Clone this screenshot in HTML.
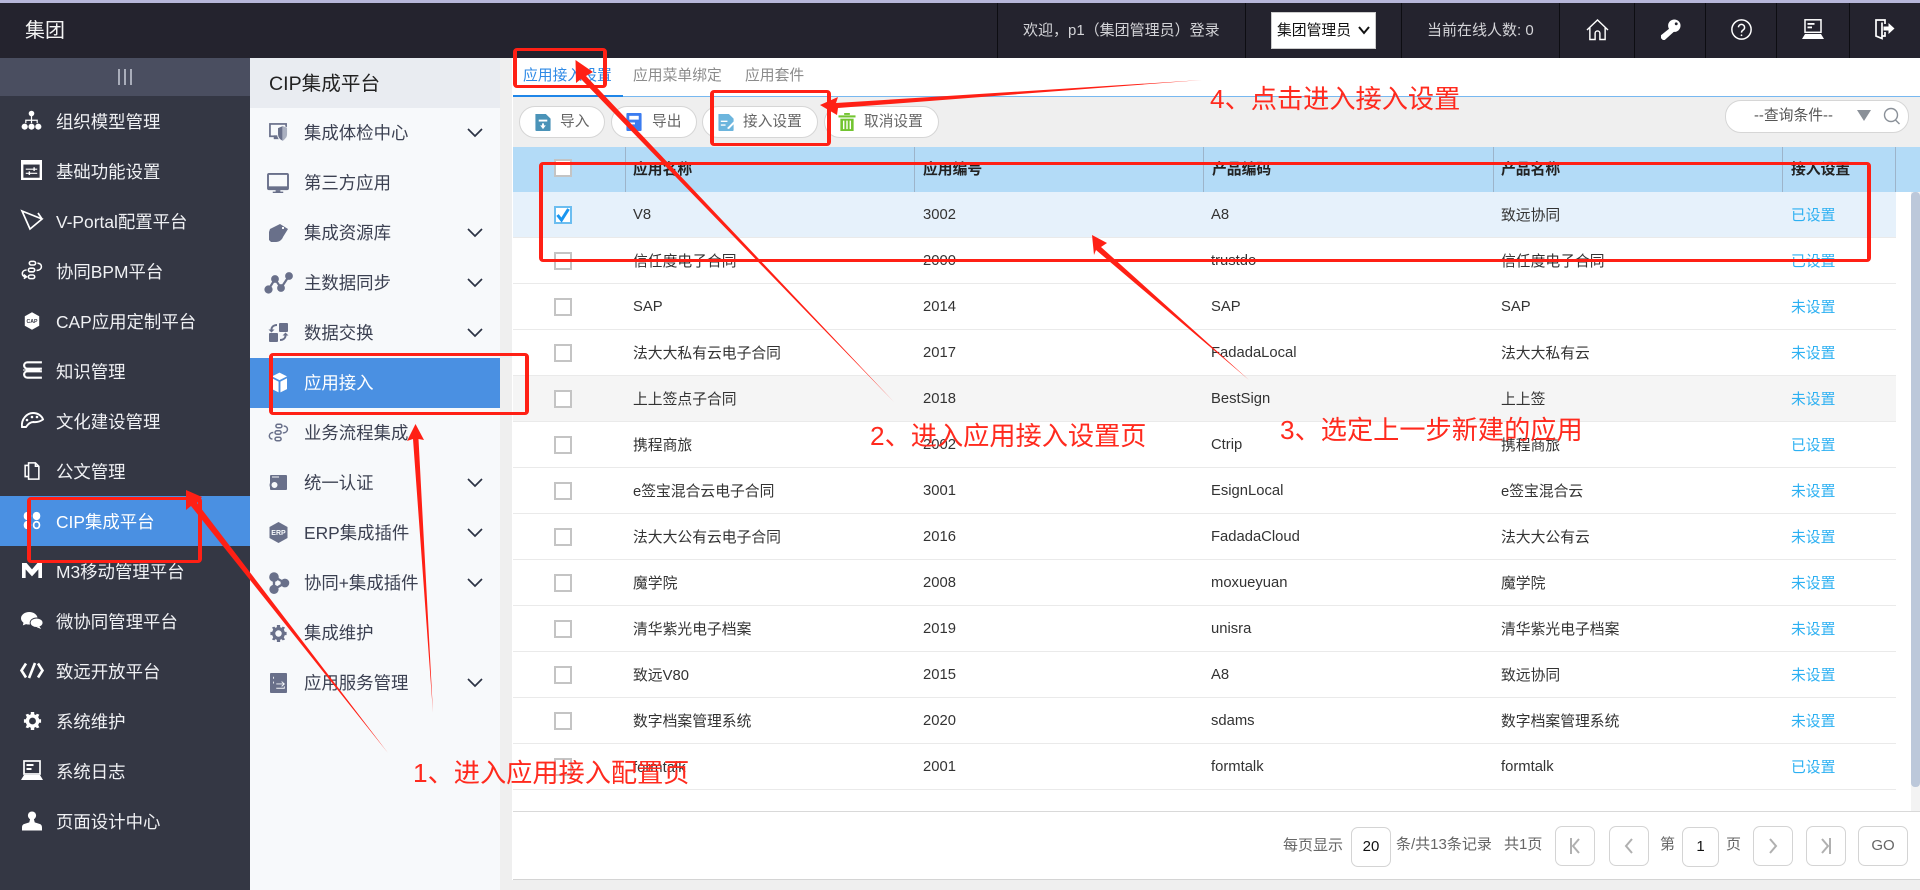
<!DOCTYPE html>
<html lang="zh-CN"><head><meta charset="utf-8"><title>CIP集成平台</title>
<style>
html,body{margin:0;padding:0;background:#fff}
#p{position:relative;width:1920px;height:890px;overflow:hidden;background:#fff;font-family:"Liberation Sans","Noto Sans CJK SC",sans-serif;color:#333}
#p div,#p span.a{position:absolute;white-space:nowrap}
#p svg{position:absolute;overflow:visible}
.n{left:56px;width:190px;height:50px;line-height:50px;font-size:17.4px;color:#f0f1f4;transform:translateY(1px)}
.s{left:304px;width:170px;height:50px;line-height:50px;font-size:17.4px;color:#3c4152}
.sep{top:3px;width:1px;height:55px;background:#0d0d12}
.t{height:46px;line-height:46px;font-size:14.8px;color:#333;transform:translateY(1px)}
.h{top:147px;height:45px;line-height:45px;font-size:14.8px;color:#222;font-weight:bold;transform:translateY(1px)}
.hs{top:147px;width:1px;height:45px;background:#9db4ca}
.rl{left:513px;width:1383px;height:1px;background:#eaeaea}
.l{height:46px;line-height:46px;font-size:14.8px;color:#2cb0f2;left:1791px;transform:translateY(1px)}
.c{left:554px;width:14px;height:14px;border:2px solid #c4c4c4;background:#fff}
.b{top:106px;height:30px;border:1px solid #d6d6d6;border-radius:16px;background:#fff;line-height:30px;font-size:14.7px;color:#666}
.pb{top:826px;height:38px;border:1px solid #d4d4d4;border-radius:7px;background:#fff;text-align:center;line-height:38px;font-size:15px;color:#666}
.f{top:826px;height:38px;line-height:38px;font-size:15px;color:#666}
.r{border-style:solid;border-color:#ff2015;border-width:3.5px 4.5px;border-radius:4px;box-sizing:border-box}
.lab{font-size:26.2px;color:#ff2a1e;height:36px;line-height:36px}
</style></head><body><div id="p">

<!-- top -->
<div style="left:0;top:0;width:1920px;height:3px;background:#b7b7da"></div>
<div style="left:0;top:3px;width:1920px;height:55px;background:#24232e"></div>
<div style="left:25px;top:11px;height:40px;line-height:40px;font-size:20px;color:#f4f4f4">集团</div>
<div class="sep" style="left:997px"></div><div class="sep" style="left:1245px"></div><div class="sep" style="left:1401px"></div><div class="sep" style="left:1559px"></div><div class="sep" style="left:1634px"></div><div class="sep" style="left:1705px"></div><div class="sep" style="left:1776px"></div><div class="sep" style="left:1849px"></div>
<div style="left:1023px;top:11px;height:40px;line-height:40px;font-size:15px;color:#d4d4d8">欢迎，p1（集团管理员）登录</div>
<div style="left:1271px;top:12px;width:105px;height:37px;background:#fff;border:1px solid #ccc;box-sizing:border-box"></div>
<div style="left:1277px;top:11px;height:40px;line-height:40px;font-size:14.8px;color:#111">集团管理员</div>
<svg style="left:1358px;top:25px" width="12" height="10" viewBox="0 0 12 10"><path d="M1 2l5 6 5-6" fill="none" stroke="#111" stroke-width="2"/></svg>
<div style="left:1427px;top:11px;height:40px;line-height:40px;font-size:15px;color:#d4d4d8">当前在线人数: 0</div>

<svg style="left:1586px;top:19px" width="23" height="21" viewBox="0 0 24 22" fill="none" stroke="#fff" stroke-width="1.500"><path d="M1 11.500 12 1l11 10.500"/><path d="M4 9v12.500h5.500V15a2.500 2.500 0 0 1 5 0v6.500H20V9"/></svg>
<svg style="left:1660px;top:19px" width="21" height="21" viewBox="0 0 22 22"><circle cx="15" cy="7" r="6.500" fill="#fff"/><circle cx="17" cy="5" r="1.500" fill="#24232e"/><path d="M11 9 1 17v3l2 2h2l10-9z" fill="#fff"/></svg>
<svg style="left:1731px;top:19px" width="21" height="21" viewBox="0 0 24 24" fill="none" stroke="#fff" stroke-width="1.700"><circle cx="12" cy="12" r="11"/><path d="M8.500 9.500a3.500 3.500 0 1 1 5.500 3c-1.300.8-2 1.500-2 3"/><circle cx="12" cy="18.500" r="1" fill="#fff" stroke="none"/></svg>
<svg style="left:1802px;top:19px" width="22" height="20" viewBox="0 0 22 20"><rect x="3" y=".8" width="16" height="12.500" fill="none" stroke="#fff" stroke-width="1.500"/><rect x="5.500" y="4" width="7" height="1.800" fill="#fff"/><rect x="5.500" y="7.500" width="4.500" height="1.800" fill="#fff"/><path d="M3 15h16l3 5H0z" fill="#fff"/></svg>
<svg style="left:1875px;top:19px" width="20" height="20" viewBox="0 0 20 20" fill="none" stroke="#fff" stroke-width="1.700"><path d="M10 5V1H1v16l6 2.500V3.500"/><path d="M7 17h3v-4"/><path d="M8.500 7.500h5V4l6 5.500-6 5.500v-3.500h-5z" fill="#fff" stroke="none"/></svg>

<!-- left sidebar -->
<div style="left:0;top:58px;width:250px;height:832px;background:#343744"></div>
<div style="left:0;top:58px;width:250px;height:38px;background:#4a4e60"></div>
<div style="left:118px;top:69px;width:2px;height:16px;background:#a9adba"></div><div style="left:124px;top:69px;width:2px;height:16px;background:#a9adba"></div><div style="left:130px;top:69px;width:2px;height:16px;background:#a9adba"></div>
<div style="left:0;top:496px;width:250px;height:50px;background:#4a90e2"></div>

<div class="n" style="top:96px">组织模型管理</div>
<div class="n" style="top:146px">基础功能设置</div>
<div class="n" style="top:196px">V-Portal配置平台</div>
<div class="n" style="top:246px">协同BPM平台</div>
<div class="n" style="top:296px">CAP应用定制平台</div>
<div class="n" style="top:346px">知识管理</div>
<div class="n" style="top:396px">文化建设管理</div>
<div class="n" style="top:446px">公文管理</div>
<div class="n" style="top:496px;color:#fff">CIP集成平台</div>
<div class="n" style="top:546px">M3移动管理平台</div>
<div class="n" style="top:596px">微协同管理平台</div>
<div class="n" style="top:646px">致远开放平台</div>
<div class="n" style="top:696px">系统维护</div>
<div class="n" style="top:746px">系统日志</div>
<div class="n" style="top:796px">页面设计中心</div>

<svg style="left:21px;top:110px" width="21" height="21" viewBox="0 0 23 24" fill="#fff"><circle cx="11.500" cy="4" r="3.200"/><path d="M10.800 6h1.400v5h6.500v4h-1.400v-2.600H12.200V15h-1.400v-2.600H5.700V15H4.300v-4h6.500z"/><circle cx="3.700" cy="19" r="3.500"/><circle cx="11.500" cy="19" r="3.500"/><circle cx="19.300" cy="19" r="3.500"/></svg>
<svg style="left:21px;top:160px" width="21" height="20" viewBox="0 0 22 22" preserveAspectRatio="none"><rect width="22" height="22" fill="#fff"/><rect x="2.500" y="5" width="17" height="14.500" fill="#343744"/><path d="M5 9.500h12v1.200H5zM5 14h12v1.200H5z" fill="#fff"/><rect x="13" y="8" width="1.500" height="4" fill="#fff"/><rect x="8" y="12.500" width="1.500" height="4" fill="#fff"/></svg>
<svg style="left:21px;top:210px" width="22" height="20" viewBox="0 0 22 20" fill="none" stroke="#fff" stroke-width="1.700"><path d="M1 1l20 8L9 19z"/><path d="M17 3l4 6"/></svg>
<svg style="left:21px;top:260px" width="22" height="20" viewBox="0 0 24 22" fill="none" stroke="#fff" stroke-width="1.700"><rect x="9" y="1.500" width="7" height="4" rx="2"/><rect x="8" y="9" width="7" height="4" rx="2"/><rect x="8" y="16.500" width="7" height="4" rx="2"/><path d="M18 3.500c6 0 6 8-1 8"/><path d="M6 11C0 11 0 18.500 5 18.500"/><path d="M3 16l3 2.500-3 2"/></svg>
<svg style="left:24px;top:312px" width="16" height="18" viewBox="0 0 20 22"><path d="M10 0l9 5v12l-9 5-9-5V5z" fill="#fff"/><text x="10" y="13.500" font-size="6.500" font-family="Liberation Sans" font-weight="bold" fill="#343744" text-anchor="middle">CAP</text></svg>
<svg style="left:21px;top:361px" width="22" height="18" viewBox="0 0 24 20" fill="none" stroke="#fff" stroke-width="2.400"><path d="M23 1.500H7c-5 0-5 7 0 7h16"/><path d="M23 11.500H7c-5 0-5 7 0 7h16"/><path d="M2 10h19" stroke-width="1"/></svg>
<svg style="left:20px;top:412px" width="24" height="16" viewBox="0 0 24 16" fill="none" stroke="#fff" stroke-width="1.900"><path d="M6 15H2C1 7 7 1 13 1c5 0 9 3 10 6.500-3 2-6 3-9.500 2.500C10 10 8 12 6 15z"/><circle cx="7" cy="8" r="1.300" fill="#fff" stroke="none"/><circle cx="12" cy="5" r="1.300" fill="#fff" stroke="none"/><circle cx="17" cy="5" r="1.300" fill="#fff" stroke="none"/></svg>
<svg style="left:24px;top:462px" width="16" height="18" viewBox="0 0 18 21" fill="none" stroke="#fff" stroke-width="1.800"><path d="M5 4V1h8l4 4v15H5z"/><path d="M13 1v4h4"/><path d="M5 4H1v13h4"/></svg>
<svg style="left:22px;top:511px" width="20" height="19" viewBox="0 0 22 23"><rect x="1" y="1" width="9" height="10" rx="4.500" fill="#fff"/><rect x="12" y="1" width="9" height="10" rx="4.500" fill="#fff"/><rect x="1" y="12" width="9" height="10" rx="4.500" fill="#fff"/><rect x="13" y="13" width="7" height="8" rx="3.500" fill="none" stroke="#fff" stroke-width="2"/></svg>
<svg style="left:22px;top:563px" width="20" height="15" viewBox="0 0 22 19" preserveAspectRatio="none"><path d="M0 0h5l6 8 6-8h5v19h-4V8l-7 9-7-9v11H0z" fill="#fff"/></svg>
<svg style="left:21px;top:612px" width="22" height="17" viewBox="0 0 24 19" preserveAspectRatio="none" fill="#fff"><ellipse cx="9" cy="7" rx="9" ry="7"/><path d="M3 11l-1 4 5-2z"/><ellipse cx="17" cy="12" rx="7" ry="5.300" stroke="#343744"/><path d="M20 16l2 3-5-2z"/></svg>
<svg style="left:20px;top:662px" width="24" height="17" viewBox="0 0 24 17" fill="none" stroke="#fff" stroke-width="2.600"><path d="M6 1.500 1.500 8.500 6 15.500"/><path d="M18 1.500l4.500 7-4.500 7"/><path d="M15 1 9 16"/></svg>
<svg style="left:23px;top:712px" width="19" height="18" viewBox="0 0 20 21"><circle cx="10" cy="10.500" r="6" fill="none" stroke="#fff" stroke-width="4"/><path d="M8 0h4v4H8zM8 17h4v4H8zM0 8.500h4v4H0zM16 8.500h4v4h-4zM2 3l3-1 2 3-3 2zM18 3l-3-1-2 3 3 2zM2 18l3 1 2-3-3-2zM18 18l-3 1-2-3 3-2z" fill="#fff"/></svg>
<svg style="left:21px;top:760px" width="22" height="20" viewBox="0 0 22 20"><rect x="3" y="1" width="16" height="13" fill="none" stroke="#fff" stroke-width="1.700"/><rect x="5.500" y="4" width="7" height="2" fill="#fff"/><rect x="5.500" y="8" width="5" height="2" fill="#fff"/><path d="M3 15h16l3 5H0z" fill="#fff"/></svg>
<svg style="left:22px;top:811px" width="20" height="20" viewBox="0 0 22 21" fill="#fff"><circle cx="11" cy="4.500" r="4.500"/><path d="M9 8h4l1 4 6 2c2 1 2 3 2 4v3H0v-3c0-1 0-3 2-4l6-2z"/></svg>

<!-- second column -->
<div style="left:250px;top:58px;width:250px;height:832px;background:#f7f9fb"></div>
<div style="left:250px;top:58px;width:250px;height:50px;background:#e9ecf1"></div>
<div style="left:269px;top:59px;height:50px;line-height:50px;font-size:19.6px;color:#222">CIP集成平台</div>
<div style="left:500px;top:58px;width:12px;height:832px;background:#efefef"></div>
<div style="left:250px;top:358px;width:250px;height:50px;background:#4a90e2"></div>

<div class="s" style="top:108px">集成体检中心</div>
<div class="s" style="top:158px">第三方应用</div>
<div class="s" style="top:208px">集成资源库</div>
<div class="s" style="top:258px">主数据同步</div>
<div class="s" style="top:308px">数据交换</div>
<div class="s" style="top:358px;color:#fff">应用接入</div>
<div class="s" style="top:408px">业务流程集成</div>
<div class="s" style="top:458px">统一认证</div>
<div class="s" style="top:508px">ERP集成插件</div>
<div class="s" style="top:558px">协同+集成插件</div>
<div class="s" style="top:608px">集成维护</div>
<div class="s" style="top:658px">应用服务管理</div>

<svg style="left:269px;top:123px" width="19" height="19" viewBox="0 0 20 20"><rect x="1" y="1" width="17" height="13" fill="none" stroke="#69708a" stroke-width="1.800"/><rect x="5" y="13" width="6" height="4" fill="#69708a"/><path d="M9 5l5-2 5 2v7c0 3-3 6-5 7-3-1-5-4-5-7z" fill="#69708a" stroke="#f7f9fb"/><path d="M14 3v16c2-1 5-4 5-7V5z" fill="#aab0c0"/></svg>
<svg style="left:267px;top:173px" width="22" height="20" viewBox="0 0 23 21"><path d="M2 0h19a2 2 0 0 1 2 2v14a2 2 0 0 1-2 2H2a2 2 0 0 1-2-2V2a2 2 0 0 1 2-2z" fill="#69708a"/><rect x="2" y="2" width="19" height="12" fill="#f7f9fb"/><path d="M9 18h5v1.500h3V21H6v-1.500h3z" fill="#69708a"/></svg>
<svg style="left:268px;top:223px" width="21" height="20" viewBox="0 0 21 20" fill="#69708a"><path d="M12 1l8 5-5 8c-1 3-4 5-7 5H3l-2-2V9l1-3 4-2z"/><rect x="14" y="4" width="2" height="2" fill="#f7f9fb"/></svg>
<svg style="left:265px;top:273px" width="27" height="20" viewBox="0 0 27 20" fill="none" stroke="#69708a" stroke-width="2.200"><path d="M3.500 16.500 10 6l6 9 8-12"/><circle cx="3.500" cy="16.500" r="3" fill="#69708a"/><circle cx="10" cy="6" r="2.800" fill="#69708a"/><circle cx="16" cy="15" r="2.800" fill="#69708a"/><circle cx="24" cy="3" r="2.800" fill="#69708a"/></svg>
<svg style="left:269px;top:323px" width="19" height="19" viewBox="0 0 19 19" fill="#69708a"><rect x="10" y="0" width="9" height="9" rx="1"/><rect x="0" y="10" width="9" height="9" rx="1"/><path d="M8 1v2C5 3 3.500 4.500 3.500 6.500H5.500L2.500 9.500-.5 6.500h2C1.500 3.500 4 1 8 1zM11 18v-2c3 0 4.500-1.500 4.500-3.500h-2l3-3 3 3h-2C17.500 15.500 15 18 11 18z"/></svg>
<svg style="left:272px;top:372px" width="15" height="21" viewBox="0 0 16 21" fill="#fff"><path d="M8 0l8 4-8 4-8-4z"/><path d="M0 6l7 3.500V21l-7-3.500zM16 6l-7 3.500V21l7-3.500z"/></svg>
<svg style="left:267px;top:423px" width="23" height="19" viewBox="0 0 24 22" fill="none" stroke="#69708a" stroke-width="1.700"><rect x="9" y="1.500" width="7" height="4" rx="2"/><rect x="8" y="9" width="7" height="4" rx="2"/><rect x="8" y="16.500" width="7" height="4" rx="2"/><path d="M18 3.500c6 0 6 8-1 8"/><path d="M6 11C0 11 0 18.500 5 18.500"/></svg>
<svg style="left:270px;top:475px" width="17" height="15" viewBox="0 0 17 15" fill="#69708a"><rect x="0" y="0" width="17" height="15" rx="1"/><rect x="2" y="1.500" width="7" height="1" fill="#f7f9fb"/><circle cx="4.500" cy="10" r="4" fill="#f7f9fb" stroke="#69708a" stroke-width="2"/></svg>
<svg style="left:269px;top:522px" width="19" height="21" viewBox="0 0 19 21"><path d="M9.500 0l9 5v11l-9 5-9-5V5z" fill="#69708a"/><text x="9.500" y="13" font-size="7" font-family="Liberation Sans" font-weight="bold" fill="#f7f9fb" text-anchor="middle">ERP</text></svg>
<svg style="left:269px;top:573px" width="20" height="20" viewBox="0 0 21 22" fill="none" stroke="#69708a" stroke-width="2.600"><path d="M5 4l12 7L5 18z"/><circle cx="5" cy="4.500" r="4" fill="#69708a"/><circle cx="17" cy="11" r="3.500" fill="#69708a"/><circle cx="5" cy="18" r="3.800" fill="#69708a"/></svg>
<svg style="left:270px;top:625px" width="17" height="17" viewBox="0 0 20 21"><circle cx="10" cy="10.500" r="6" fill="none" stroke="#69708a" stroke-width="4"/><path d="M8 0h4v4H8zM8 17h4v4H8zM0 8.500h4v4H0zM16 8.500h4v4h-4zM2 3l3-1 2 3-3 2zM18 3l-3-1-2 3 3 2zM2 18l3 1 2-3-3-2zM18 18l-3 1-2-3 3-2z" fill="#69708a"/></svg>
<svg style="left:270px;top:673px" width="17" height="20" viewBox="0 0 19 21" preserveAspectRatio="none"><rect width="19" height="21" rx="1" fill="#69708a"/><path d="M7 11.500h9M13 9l3 2.500-3 2.500M7 16h9v-2" fill="none" stroke="#f7f9fb" stroke-width="1"/><path d="M3.500 4h1v2h-1zM3.500 9h1v2h-1z" fill="#f7f9fb"/></svg>

<svg style="left:468px;top:129px" width="14" height="400" viewBox="0 0 14 400" fill="none" stroke="#2c3345" stroke-width="1.700"><path d="M0 0l7 7 7-7M0 100l7 7 7-7M0 150l7 7 7-7M0 200l7 7 7-7"/></svg>
<svg style="left:468px;top:479px" width="14" height="220" viewBox="0 0 14 220" fill="none" stroke="#2c3345" stroke-width="1.700"><path d="M0 0l7 7 7-7M0 50l7 7 7-7M0 100l7 7 7-7M0 200l7 7 7-7"/></svg>

<!-- content -->
<div style="left:513px;top:58px;width:1407px;height:39px;background:#fff"></div>
<div style="left:523px;top:58px;height:36px;line-height:36px;font-size:14.8px;color:#2e8ae6">应用接入设置</div>
<div style="left:633px;top:58px;height:36px;line-height:36px;font-size:14.8px;color:#8b8b8b">应用菜单绑定</div>
<div style="left:745px;top:58px;height:36px;line-height:36px;font-size:14.8px;color:#8b8b8b">应用套件</div>
<div style="left:513px;top:96px;width:1407px;height:1px;background:#78b8f0"></div>
<div style="left:513px;top:95px;width:110px;height:2px;background:#1f86e8"></div>

<div style="left:513px;top:97px;width:1407px;height:50px;background:#efefef"></div>
<div class="b" style="left:519px;width:84px"></div><div class="b" style="left:611px;width:84px"></div><div class="b" style="left:702px;width:114px"></div><div class="b" style="left:824px;width:113px"></div>
<div class="b" style="left:560px;border:0;background:none;top:107px">导入</div>
<div class="b" style="left:652px;border:0;background:none;top:107px">导出</div>
<div class="b" style="left:743px;border:0;background:none;top:107px">接入设置</div>
<div class="b" style="left:864px;border:0;background:none;top:107px">取消设置</div>
<svg style="left:535px;top:113px" width="16" height="18" viewBox="0 0 16 19"><path d="M0 1h11l5 5v12a1 1 0 0 1-1 1H1a1 1 0 0 1-1-1z" fill="#4a93b8"/><rect x="3.500" y="7" width="9" height="2" fill="#fff"/><path d="M8 17l-3-4h2v-2h2v2h2z" fill="#fff"/></svg>
<svg style="left:626px;top:113px" width="16" height="18" viewBox="0 0 16 19"><rect width="16" height="19" rx="1" fill="#3b7cf0"/><rect x="3" y="3" width="10" height="4" fill="#fff"/><rect x="3" y="10" width="6" height="2" fill="#fff"/></svg>
<svg style="left:718px;top:113px" width="17" height="18" viewBox="0 0 17 19"><path d="M0 1h11l5 5v12a1 1 0 0 1-1 1H1a1 1 0 0 1-1-1z" fill="#6cb5dd"/><path d="M2.500 8h7v1.500h-7zM2.500 12h5v1.500h-5z" fill="#fff"/><path d="M9 16l7-7 1 2-6 6z" fill="#fff"/></svg>
<svg style="left:838px;top:113px" width="18" height="18" viewBox="0 0 18 19" fill="#72c430"><rect x="0" y="2.500" width="18" height="2.200"/><rect x="6" y="0" width="6" height="2"/><path d="M2 6h14v13H2z"/><path d="M5.500 8v9M9 8v9M12.500 8v9" stroke="#fff" stroke-width="1.500"/></svg>

<div style="left:1725px;top:100px;width:182px;height:31px;background:#fff;border:1px solid #d6d6d6;border-radius:16px"></div>
<div style="left:1754px;top:100px;height:32px;line-height:32px;font-size:14.8px;color:#555">--查询条件--</div>
<svg style="left:1857px;top:110px" width="14" height="11" viewBox="0 0 14 11"><path d="M0 0h14L7 11z" fill="#8a9098"/></svg>
<svg style="left:1883px;top:107px" width="18" height="18" viewBox="0 0 18 18" fill="none" stroke="#8a9098" stroke-width="1.400"><circle cx="8" cy="8" r="6.500"/><path d="M12.500 13l4 4"/></svg>

<!-- table head -->
<div style="left:513px;top:147px;width:1407px;height:45px;background:#b3dbf7"></div>
<div class="hs" style="left:625px"></div><div class="hs" style="left:914px"></div><div class="hs" style="left:1203px"></div><div class="hs" style="left:1493px"></div><div class="hs" style="left:1782px"></div><div class="hs" style="left:1895px"></div>
<div class="c" style="top:159px"></div>
<div class="h" style="left:633px">应用名称</div><div class="h" style="left:923px">应用编号</div><div class="h" style="left:1212px">产品编码</div><div class="h" style="left:1501px">产品名称</div><div class="h" style="left:1791px">接入设置</div>

<!-- rows -->
<div style="left:513px;top:192px;width:1383px;height:46px;background:#e6f1fb"></div>
<div style="left:513px;top:376px;width:1383px;height:46px;background:#f5f5f5"></div>
<div class="rl" style="top:237px"></div><div class="rl" style="top:283px"></div><div class="rl" style="top:329px"></div><div class="rl" style="top:375px"></div><div class="rl" style="top:421px"></div><div class="rl" style="top:467px"></div><div class="rl" style="top:513px"></div><div class="rl" style="top:559px"></div><div class="rl" style="top:605px"></div><div class="rl" style="top:651px"></div><div class="rl" style="top:697px"></div><div class="rl" style="top:743px"></div><div class="rl" style="top:789px"></div>

<div class="c" style="top:206px;border-color:#6bbdf0"></div>
<svg style="left:556px;top:208px" width="14" height="14" viewBox="0 0 14 14"><path d="M1.500 7l4 5 7-11" fill="none" stroke="#1a96f0" stroke-width="3"/></svg>
<div class="c" style="top:252px"></div><div class="c" style="top:298px"></div><div class="c" style="top:344px"></div><div class="c" style="top:390px"></div><div class="c" style="top:436px"></div><div class="c" style="top:482px"></div><div class="c" style="top:528px"></div><div class="c" style="top:574px"></div><div class="c" style="top:620px"></div><div class="c" style="top:666px"></div><div class="c" style="top:712px"></div><div class="c" style="top:758px"></div>

<div class="t" style="left:633px;top:191px">V8</div><div class="t" style="left:923px;top:191px">3002</div><div class="t" style="left:1211px;top:191px">A8</div><div class="t" style="left:1501px;top:192px">致远协同</div><div class="l" style="top:192px">已设置</div>
<div class="t" style="left:633px;top:238px">信任度电子合同</div><div class="t" style="left:923px;top:237px">2000</div><div class="t" style="left:1211px;top:237px">trustdo</div><div class="t" style="left:1501px;top:238px">信任度电子合同</div><div class="l" style="top:238px">已设置</div>
<div class="t" style="left:633px;top:283px">SAP</div><div class="t" style="left:923px;top:283px">2014</div><div class="t" style="left:1211px;top:283px">SAP</div><div class="t" style="left:1501px;top:283px">SAP</div><div class="l" style="top:284px">未设置</div>
<div class="t" style="left:633px;top:330px">法大大私有云电子合同</div><div class="t" style="left:923px;top:329px">2017</div><div class="t" style="left:1211px;top:329px">FadadaLocal</div><div class="t" style="left:1501px;top:330px">法大大私有云</div><div class="l" style="top:330px">未设置</div>
<div class="t" style="left:633px;top:376px">上上签点子合同</div><div class="t" style="left:923px;top:375px">2018</div><div class="t" style="left:1211px;top:375px">BestSign</div><div class="t" style="left:1501px;top:376px">上上签</div><div class="l" style="top:376px">未设置</div>
<div class="t" style="left:633px;top:422px">携程商旅</div><div class="t" style="left:923px;top:421px">2002</div><div class="t" style="left:1211px;top:421px">Ctrip</div><div class="t" style="left:1501px;top:422px">携程商旅</div><div class="l" style="top:422px">已设置</div>
<div class="t" style="left:633px;top:468px">e签宝混合云电子合同</div><div class="t" style="left:923px;top:467px">3001</div><div class="t" style="left:1211px;top:467px">EsignLocal</div><div class="t" style="left:1501px;top:468px">e签宝混合云</div><div class="l" style="top:468px">未设置</div>
<div class="t" style="left:633px;top:514px">法大大公有云电子合同</div><div class="t" style="left:923px;top:513px">2016</div><div class="t" style="left:1211px;top:513px">FadadaCloud</div><div class="t" style="left:1501px;top:514px">法大大公有云</div><div class="l" style="top:514px">未设置</div>
<div class="t" style="left:633px;top:560px">魔学院</div><div class="t" style="left:923px;top:559px">2008</div><div class="t" style="left:1211px;top:559px">moxueyuan</div><div class="t" style="left:1501px;top:560px">魔学院</div><div class="l" style="top:560px">未设置</div>
<div class="t" style="left:633px;top:606px">清华紫光电子档案</div><div class="t" style="left:923px;top:605px">2019</div><div class="t" style="left:1211px;top:605px">unisra</div><div class="t" style="left:1501px;top:606px">清华紫光电子档案</div><div class="l" style="top:606px">未设置</div>
<div class="t" style="left:633px;top:652px">致远V80</div><div class="t" style="left:923px;top:651px">2015</div><div class="t" style="left:1211px;top:651px">A8</div><div class="t" style="left:1501px;top:652px">致远协同</div><div class="l" style="top:652px">未设置</div>
<div class="t" style="left:633px;top:698px">数字档案管理系统</div><div class="t" style="left:923px;top:697px">2020</div><div class="t" style="left:1211px;top:697px">sdams</div><div class="t" style="left:1501px;top:698px">数字档案管理系统</div><div class="l" style="top:698px">未设置</div>
<div class="t" style="left:633px;top:744px">formtalk</div><div class="t" style="left:923px;top:743px">2001</div><div class="t" style="left:1211px;top:743px">formtalk</div><div class="t" style="left:1501px;top:743px">formtalk</div><div class="l" style="top:744px">已设置</div>

<!-- scrollbar -->
<div style="left:1911px;top:192px;width:9px;height:619px;background:#f3f3f3"></div>
<div style="left:1911px;top:192px;width:9px;height:595px;background:#bcc8da;border-radius:4px"></div>

<!-- footer -->
<div style="left:513px;top:811px;width:1407px;height:1px;background:#d9d9d9"></div>
<div style="left:513px;top:879px;width:1407px;height:1px;background:#d4d4d4"></div>
<div style="left:500px;top:880px;width:1420px;height:10px;background:#efefef"></div>
<div class="f" style="left:1283px;top:827px">每页显示</div>
<div class="pb" style="left:1351px;top:827px;width:38px;color:#111">20</div>
<div class="f" style="left:1396px;top:826px">条/共13条记录</div>
<div class="f" style="left:1504px;top:826px">共1页</div>
<div class="pb" style="left:1555px;width:38px"></div><div class="pb" style="left:1609px;width:38px"></div>
<div class="f" style="left:1660px">第</div>
<div class="pb" style="left:1682px;top:827px;width:35px;color:#111">1</div>
<div class="f" style="left:1726px">页</div>
<div class="pb" style="left:1753px;width:38px"></div><div class="pb" style="left:1806px;width:38px"></div>
<div class="pb" style="left:1858px;width:48px">GO</div>
<svg style="left:1569px;top:838px" width="12" height="16" viewBox="0 0 12 16" fill="none" stroke="#b0b0b0" stroke-width="2"><path d="M2 0v16M10 1 4 8l6 7"/></svg>
<svg style="left:1623px;top:838px" width="12" height="16" viewBox="0 0 12 16" fill="none" stroke="#b0b0b0" stroke-width="2"><path d="M9 1 3 8l6 7"/></svg>
<svg style="left:1767px;top:838px" width="12" height="16" viewBox="0 0 12 16" fill="none" stroke="#b0b0b0" stroke-width="2"><path d="M3 1l6 7-6 7"/></svg>
<svg style="left:1820px;top:838px" width="12" height="16" viewBox="0 0 12 16" fill="none" stroke="#b0b0b0" stroke-width="2"><path d="M10 0v16M2 1l6 7-6 7"/></svg>

<!-- annotations -->
<div class="r" style="left:513px;top:48px;width:94px;height:40px"></div>
<div class="r" style="left:539px;top:162px;height:100px;width:1332px"></div>
<div class="r" style="left:710px;top:90px;width:121px;height:56px"></div>
<div class="r" style="left:269px;top:353px;width:260px;height:62px"></div>
<div class="r" style="left:27px;top:497px;width:175px;height:66px"></div>

<svg style="left:0;top:0" width="1920" height="890" viewBox="0 0 1920 890" fill="#ff2015">
<path d="M186 490 202 497 197 503 388 753 191 506 186 510z"/>
<path d="M415.500 424 424 440 418.500 439 433 713 413 439 407 441z"/>
<path d="M575.500 60 593 72 586 76 894 402 581 79 576 83z"/>
<path d="M820 105 838 97 836 103 1202 80 838 108 837 115z"/>
<path d="M1092 235 1107 243 1101 247 1249 380 1096 250 1094 255z"/>
</svg>

<div class="lab" style="left:413px;top:755px">1、进入应用接入配置页</div>
<div class="lab" style="left:870px;top:418px">2、进入应用接入设置页</div>
<div class="lab" style="left:1280px;top:412px">3、选定上一步新建的应用</div>
<div class="lab" style="left:1210px;top:81px">4、点击进入接入设置</div>
</div></body></html>
